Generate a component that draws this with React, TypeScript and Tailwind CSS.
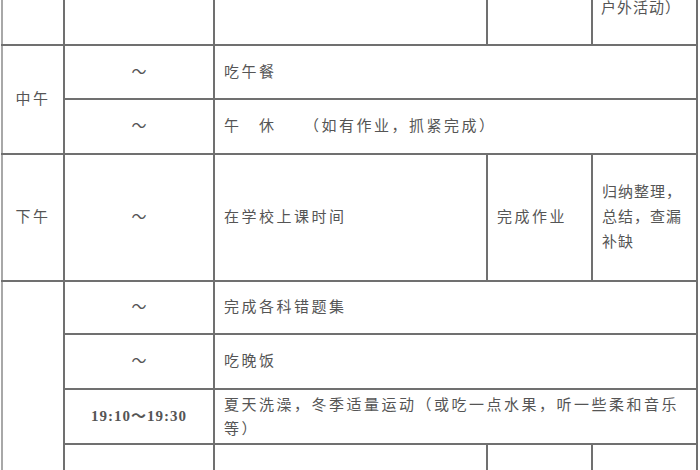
import React from 'react';

const line = "border-2 border-[#707070]";
const cell = `${line} align-middle px-[9px] text-left`;
const timeCell = `${line} align-middle text-center`;

const Tilde = () => <span className="tracking-normal">～</span>;

export default function App() {
  return (
    <div className="h-[470px] w-[700px] overflow-hidden bg-white">
      <table className="table-fixed border-collapse ml-[1px] w-[695px] text-[15px] tracking-[2.5px] text-[#555] font-['Liberation_Serif','Noto_Sans_CJK_SC',serif]">
        <colgroup>
          <col className="w-[62px]" />
          <col className="w-[150px]" />
          <col className="w-[273px]" />
          <col className="w-[105px]" />
          <col className="w-[105px]" />
        </colgroup>
        <tbody>
          {/* tail of the morning block, cut off at the top */}
          <tr className="h-[45px]">
            <td className={`${line} border-t-0 border-l-[#a8a8a8]`} />
            <td className={`${line} border-t-0`} />
            <td className={`${line} border-t-0`} />
            <td className={`${line} border-t-0`} />
            <td className={`${line} border-t-0 align-top px-[8px] leading-[16px] tracking-[1px]`}>户外活动）</td>
          </tr>

          <tr className="h-[54px]">
            <td rowSpan={2} className={`${timeCell} border-l-[#a8a8a8]`}>中午</td>
            <td className={timeCell}><Tilde /></td>
            <td colSpan={3} className={cell}>吃午餐</td>
          </tr>
          <tr className="h-[55px]">
            <td className={timeCell}><Tilde /></td>
            <td colSpan={3} className={cell}>午　休　　（如有作业，抓紧完成）</td>
          </tr>

          <tr className="h-[127px]">
            <td className={`${timeCell} border-l-[#a8a8a8]`}>下午</td>
            <td className={timeCell}><Tilde /></td>
            <td className={cell}>在学校上课时间</td>
            <td className={cell}>完成作业</td>
            <td className={`${cell} px-[8px] leading-[25px] tracking-[1px] whitespace-nowrap`}>
              归纳整理，<br />总结，查漏<br />补缺
            </td>
          </tr>

          <tr className="h-[53px]">
            <td rowSpan={4} className={`${timeCell} border-l-[#a8a8a8]`} />
            <td className={timeCell}><Tilde /></td>
            <td colSpan={3} className={cell}>完成各科错题集</td>
          </tr>
          <tr className="h-[55px]">
            <td className={timeCell}><Tilde /></td>
            <td colSpan={3} className={cell}>吃晚饭</td>
          </tr>
          <tr className="h-[55px]">
            <td className={`${timeCell} font-bold tracking-[1px]`}>19:10～19:30</td>
            <td colSpan={3} className={`${cell} leading-[24px]`}>
              夏天洗澡，冬季适量运动（或吃一点水果，听一些柔和音乐等）
            </td>
          </tr>
          <tr className="h-[60px]">
            <td className={timeCell} />
            <td className={cell} />
            <td className={cell} />
            <td className={cell} />
          </tr>
        </tbody>
      </table>
    </div>
  );
}
